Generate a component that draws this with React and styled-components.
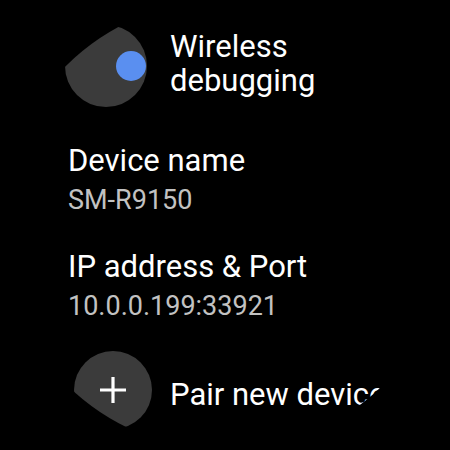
import styled, { createGlobalStyle } from "styled-components";

const GlobalStyle = createGlobalStyle`
  html, body {
    margin: 0;
    padding: 0;
    background: #000;
  }
  body {
    width: 450px;
    height: 450px;
    overflow: hidden;
    font-family: Roboto, "Noto Sans", sans-serif;
  }
`;

const Page = styled.div`
  width: 450px;
  height: 450px;
  background: #000;
`;

// round watch face: everything is clipped by the circle
const Screen = styled.div`
  width: 450px;
  height: 450px;
  border-radius: 50%;
  overflow: hidden;
  background: #000;
  display: flex;
  flex-direction: column;
`;

const Row = styled.div`
  display: flex;
  align-items: center;
  margin-top: ${({ $top }) => $top}px;
`;

const IconCircle = styled.div`
  flex: none;
  width: ${({ $size }) => $size}px;
  height: ${({ $size }) => $size}px;
  margin-left: ${({ $left }) => $left}px;
  border-radius: 50%;
  background: #3b3b3b;
  display: flex;
  align-items: center;
  justify-content: ${({ $align }) => $align || "center"};
`;

const Dot = styled.div`
  width: 30px;
  height: 30px;
  margin-right: 1px;
  border-radius: 50%;
  background: #5a8ff0;
`;

const RowLabel = styled.div`
  margin-left: ${({ $gap }) => $gap}px;
  margin-top: ${({ $shift }) => $shift || 0}px;
  color: #fff;
  font-size: 31px;
  line-height: 34px;
  white-space: nowrap;
`;

const InfoBlock = styled.div`
  padding-left: 68px;
  margin-top: ${({ $top }) => $top}px;
  display: flex;
  flex-direction: column;
`;

const InfoTitle = styled.div`
  color: #fff;
  font-size: 31px;
  line-height: 34px;
  white-space: nowrap;
`;

const InfoValue = styled.div`
  color: #c2c2c2;
  font-size: 27px;
  line-height: 34px;
  margin-top: 5px;
  white-space: nowrap;
`;

const Plus = () => (
  <svg width="30" height="30" viewBox="0 0 30 30">
    <path d="M15 2v26M2 15h26" stroke="#fff" strokeWidth="3.2" fill="none" />
  </svg>
);

export default function App() {
  return (
    <Page>
      <GlobalStyle />
      <Screen>
        <Row $top={25}>
          <IconCircle $size={82} $left={65} $align="flex-end">
            <Dot />
          </IconCircle>
          <RowLabel $gap={23} $shift={-5}>
            Wireless
            <br />
            debugging
          </RowLabel>
        </Row>
        <InfoBlock $top={37}>
          <InfoTitle>Device name</InfoTitle>
          <InfoValue>SM-R9150</InfoValue>
        </InfoBlock>
        <InfoBlock $top={33}>
          <InfoTitle>IP address &amp; Port</InfoTitle>
          <InfoValue>10.0.0.199:33921</InfoValue>
        </InfoBlock>
        <Row $top={28}>
          <IconCircle $size={78} $left={74}>
            <Plus />
          </IconCircle>
          <RowLabel $gap={18} $shift={9}>
            Pair new device
          </RowLabel>
        </Row>
      </Screen>
    </Page>
  );
}
